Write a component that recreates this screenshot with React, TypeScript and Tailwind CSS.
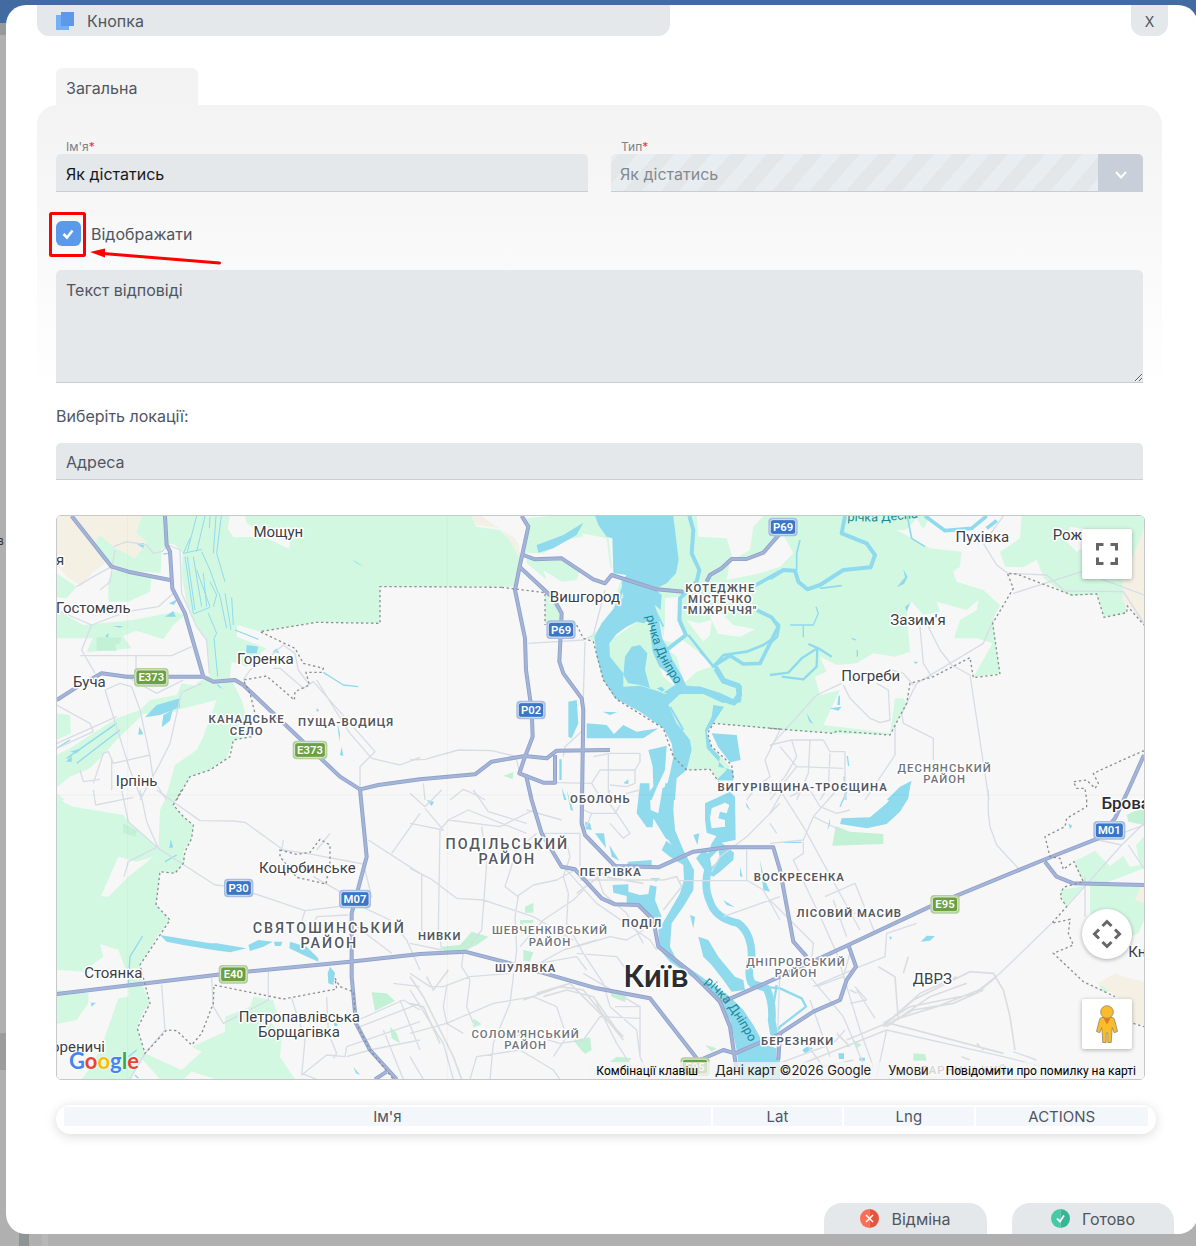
import React from "react";

type Shape = [tile: keyof typeof TILE, d: string];

/* Map tiles share one drawing space; each tile has its own origin. */
const TILE = {
  a: "translate(0 0)",
  b: "translate(1080 0)",
  c: "translate(2160 0)",
  d: "translate(0 840)",
  e: "translate(1080 840)",
  f: "translate(2160 840)",
};

const GREEN: Shape[] = [
  ["a", "M350 18V100L375 105 398 130 396 200 408 270 435 340 470 385 480 495 440 520 455 570 400 580 380 600 500 570 485 610 460 680 440 720 375 765 345 870H380L420 800 480 780 530 745 550 690 605 680 575 570 540 500 545 455 590 470 650 415 560 380 562 345 630 365 800 337 990 340 990 230H1390L1410 165 1410 130 1380 90 1350 60 1280 50 1265 18Z"],
  ["a", "M265 18H345L350 110 335 115 332 190 240 182 180 160 115 130 135 75 160 80 190 110 255 145 290 95 258 70Z"],
  ["a", "M20 40L75 70 70 100 20 75ZM20 190L80 230 50 265 20 262ZM190 180L305 200 300 245 235 275H175V210ZM20 300L100 345 250 330 375 305 405 315 370 345 340 388 260 362 200 385H20ZM130 380L210 365 245 415 110 427ZM20 610L60 615 63 670 20 690Z"],
  ["a", "M395 520L455 530 455 575 400 582 380 605 280 612 200 690 160 735 120 775 60 800 20 832V735L60 715 130 670 200 625 270 600 300 570 380 555Z"],
  ["a", "M20 850L45 870H20Z"],
  ["d", "M20 10L45 40 70 50 220 75 240 100 325 175 330 60 360 0H395L370 45 400 80 430 105 425 145 400 185 405 215 375 250 330 245 318 345 360 390 325 435 270 525 275 580 300 640 280 665 262 710 270 750 285 790 240 868H95L130 820 165 740 205 625 235 620V560L205 480 150 462 160 500 100 545 20 540Z"],
  ["d", "M20 600L115 610V640L80 690 20 702ZM525 680L600 650 610 620 670 630 685 685 650 675 695 745 690 800 735 868H500L425 845 400 868H330L270 800 285 790 395 840 455 785 425 770 525 725Z"],
  ["b", "M345 25L420 18H555L595 80 607 180 570 110 540 75 470 90 400 130 345 130ZM350 140L450 150 510 180 500 210 455 215 400 180 410 210 350 160ZM405 250L450 300 455 340 405 340ZM635 205L640 260 575 340 560 400 535 385 600 330 620 250Z"],
  ["b", "M790 18H1560L1540 60 1460 60 1560 115 1655 125 1650 170 1630 185 1640 215 1720 240 1770 285 1748 330 1770 490 1690 502 1748 400 1700 385 1632 385 1650 330 1700 300 1705 270 1670 300 1580 275 1590 305 1540 315 1505 275 1490 300 1500 425 1455 440 1390 430 1340 460 1280 465 1230 440 1250 485 1215 500 1230 555 1290 540 1240 645 1440 670 1455 565 1480 565 1490 580 1440 675 1270 670 1080 657 910 640 890 670 905 710 960 770 935 820 900 778 830 780 845 720 770 580 800 535 770 420 735 285 680 240 770 220 800 150Z"],
  ["b", "M680 335L720 340 728 420 760 500 800 535 760 560 600 530 590 400Z"],
  ["c", "M755 18L750 85 690 125 705 170 760 172 800 150 822 205 860 235 905 258 980 252 1002 322 1070 308 1058 245 1065 210 1085 150 1122 60V18Z"],
  ["f", "M945 285L910 215 975 183 1020 228 1060 198 1080 230 1110 225 1098 165 1122 140V235L1000 282ZM960 285L1122 290V390L1105 430 1080 440 960 370ZM870 300L945 287 885 350ZM988 585L1025 580 1035 600 1000 608Z"],
];

const BEIGE: Shape[] = [
  ["a", "M20 18H275L258 70 290 95 255 145 190 110 150 75 130 110 165 160 130 185 95 228 50 200 20 165Z"],
  ["b", "M185 18H240L300 60 330 100 325 140 300 90 270 55 200 45Z"],
  ["c", "M1122 60L1085 150 1058 205V275L1080 290 1122 345Z"],
  ["f", "M985 580L1035 550 1060 560 1122 575V705L1090 700 1040 620ZM1112 290H1122V340L1095 330Z"],
];

const LAND: Shape[] = [
  ["a", "M540 18L533 55 550 82 640 80 718 117 720 95 640 70 590 40 585 18Z"],
  ["b", "M215 18H335L350 50 335 120 315 85 275 60ZM515 70L590 85 600 170 575 210 555 130 530 110ZM860 18H1060L1030 50 1020 120 970 150 950 85 865 80ZM960 150L1010 150 1060 130 1120 75 1150 130 1110 170 1050 190 950 210ZM935 310L970 345 1035 358 990 380 925 372 900 320ZM765 265L808 260 805 330 825 370 785 397 760 390 765 340ZM815 388L865 425 910 468 860 485 822 520 800 440 775 420ZM830 330L865 340 905 330 900 375 880 395Z"],
  ["c", "M410 60L440 25 455 50 480 70 470 95ZM900 50L960 60 940 115 920 125 890 95Z"],
  ["d", "M205 200L260 215 310 200 235 260 175 320 153 318Z"],
];

const PARK: Shape[] = [
  ["a", "M140 382L215 383 210 400 195 405 200 422H140Z"],
  ["b", "M280 797L310 787 308 808Z"],
  ["d", "M220 100L262 122 255 140 218 128ZM965 607L1010 610 1035 633 975 663ZM1020 710L1040 730 1050 760 1025 745Z"],
  ["e", "M95 470L150 465 185 425 235 440 200 465 160 483H100ZM345 350L370 338V368H345ZM330 390H370V400H340L335 440ZM340 480L370 487 360 515 340 512ZM600 605L650 610 645 636 605 620ZM190 685L215 703 190 712ZM490 750L540 742 545 780 525 792 505 770ZM620 800L665 805 645 825 600 815ZM885 765L920 775 905 785Z"],
  ["f", "M197 108L240 125 340 132V162L187 167ZM430 790L465 793 470 812 430 812ZM250 750L275 765 260 775ZM1070 75L1100 60H1122V105L1075 95Z"],
];

const WATER: Shape[] = [
  ["b", "M555 18H790L806 150 798 190 770 220 735 238 755 255 752 300 735 285 727 330 700 340 680 335 650 350 620 372 598 400 600 440 640 490V530L690 527 740 542 765 552 795 540 805 525 870 530 960 570 940 580 880 552 810 552 775 585 800 640 840 690 845 720 830 780 800 805 795 870H760L780 790 790 740 785 700 760 655 690 605 615 565 580 510 560 440 553 380 575 340 640 260 635 215 650 195 610 190 607 85 590 80 565 45Z"],
  ["b", "M700 325L735 285 748 335 757 385 772 412 788 450 816 498 832 535 800 552 760 548 795 525 772 490 748 470 728 425 722 380 722 345Z"],
  ["b", "M640 495L645 440 665 410 690 405 712 430 705 480 720 535 690 525 655 520ZM380 105L460 75 520 38 500 75 430 115 385 128ZM475 575L500 570 505 640 485 685 475 680ZM530 640L590 645 612 672 640 645 680 665 745 655 700 685H530ZM578 605L622 607 600 615ZM715 720L770 707 765 780 740 833 725 870H695L730 830 728 770ZM905 670L980 675 992 750 960 757 925 712ZM910 585L942 590 910 640 890 665 905 715 930 740 925 770 970 780 970 812 920 810 950 780 890 715 885 660 905 620ZM640 820L655 808V822ZM448 748H455V810H448ZM455 832L470 870H462ZM740 535L755 530 765 540 755 545Z"],
  ["a", "M320 585L390 565V592L330 615 285 622ZM340 615L368 600 360 632 335 652ZM590 405L625 410 620 430 588 430ZM268 650L280 672 265 675ZM345 320L370 303 378 320ZM357 280L382 268 372 285ZM255 98L283 100 280 115ZM165 380L175 368 175 382ZM905 147L945 172 920 160ZM187 348H220L210 353ZM862 640L870 670 868 695ZM870 735L875 710 880 738ZM800 593L808 602 800 605ZM48 755L65 738 65 755ZM60 725L95 715 80 730ZM668 425L680 415 688 430ZM500 520L520 538 505 530Z"],
  ["c", "M400 178L413 200 402 222 380 232 405 202ZM405 290L420 280 410 305ZM430 455L446 455 437 462ZM110 610L130 643 118 635ZM178 595L215 590 205 602ZM205 560L210 555V585H202ZM425 812L418 840 400 870H350L390 830Z"],
  ["d", "M330 435L480 460 500 460 590 475 540 487 490 480 400 465 350 455ZM595 465L625 450 668 455 640 470 600 483ZM672 455H697L693 468H675ZM720 455L770 470 805 505V515L760 495 718 475ZM840 530L855 548 850 585 835 580 833 550ZM910 830L930 855 918 850ZM122 638H138L125 650ZM358 175L362 148 370 172ZM852 697H862V708H852Z"],
  ["e", "M690 -20H718L722 60 745 70 760 -20H795L790 60 795 120 820 180 852 240 850 300 820 350 785 400 780 470 800 510 860 550 910 585 960 620 1000 660 1030 705 1060 760 1110 780V870H990L980 780 960 690 925 640 880 582 845 560 780 515 750 480 745 420 765 388 810 310 822 270 820 225 780 200 755 180 770 150 730 85 728 112 710 112 680 70Z"],
  ["e", "M608 285L655 283V305L690 315 715 312 720 285 740 290 735 330 755 380 735 392 680 345 650 340V318L610 308ZM525 95L540 100 545 120 528 118ZM555 130H582L588 175ZM598 165L628 212 605 200ZM655 215L725 210V230L650 225ZM720 265H750L738 275ZM840 375L855 380 850 415ZM940 330L975 352 950 345ZM990 230L998 262 990 258ZM1050 210L1062 265 1080 305 1060 300ZM1007 35L1022 62 1010 50ZM50 30L72 35 65 48ZM470 0L490 62 482 60Z"],
  ["e", "M850 135L868 130 862 165ZM858 205L880 180 895 190 905 160 925 130 975 150 935 158 972 188 970 210 930 245 910 260 890 250ZM885 40L960 5 975 20 977 150 960 148 925 140 890 128 885 90ZM865 440L895 450 925 500 975 560 1000 570 1005 600 965 605 940 570 905 525 880 500Z"],
  ["f", "M420 -10L415 25 390 65 350 102 290 115 210 102 215 85 300 82 350 40 372 10 350 28 400 -10ZM180 85L172 120 180 105ZM452 455L470 437 495 438 480 452ZM357 440H366L362 450ZM97 780L110 770 130 775 105 790ZM205 790H222V807H207ZM268 803H285V812H268ZM895 100L907 107 900 118Z"],
];

/* Small islands that sit on top of the water */
const ISLANDS: Shape[] = [
  ["e", "M905 55L945 38 958 45 950 70 930 65 925 85 945 90 945 110 905 115 900 85ZM740 130L785 165 775 150ZM900 205L925 180 930 205 905 232Z"],
  ["b", "M748 832L768 790 765 830 752 838Z"],
];

/* Narrow channels, drawn as strokes: [tile, path, width] */
const CHANNELS: [keyof typeof TILE, string, number][] = [
  ["b", "M838 18L850 60 845 130 868 180 860 215 810 265 808 330 828 375 770 420", 12],
  ["b", "M662 140L655 190 600 340 575 360", 8],
  ["b", "M835 375L910 470 940 435 1010 425 1060 405 1090 385", 8],
  ["b", "M1110 185L1020 235M1040 300L1085 322 1105 350 1080 400 1050 460 1000 462 960 437 915 465 940 515 990 530 988 572 960 578 880 545 805 545", 11],
  ["b", "M805 545L870 538 930 558 972 578 988 555 985 528 940 512 918 475", 17],
  ["b", "M780 590L820 660M735 300L760 350M870 425L900 455", 6],
  ["c", "M225 18L215 70 290 100 315 135 302 172 220 180 150 225 112 238 85 215 75 182 40 180 0 205", 12],
  ["c", "M90 90L80 130 80 180M150 235L215 227M412 18L425 85 465 110", 5],
  ["c", "M465 18L525 62 605 55 650 18M650 55L680 32", 11],
  ["c", "M0 318L28 345 22 380 0 400M0 495L55 488 95 445 142 415 140 470 100 508 35 500M115 402L145 415 185 440", 7],
  ["c", "M138 290L145 310 130 345 60 345M100 345V382M245 385L258 390M262 420V440M232 738L236 768M222 800L228 870", 4],
  ["e", "M895 235Q880 290 900 335 915 385 985 400 1025 430 1025 500 1010 550 1025 580L1070 595Q1090 640 1085 690L1095 750", 23],
  ["f", "M0 592L30 595 95 625 108 650 30 710 0 760M20 585L5 680", 7],
  ["f", "M230 5L210 50M40 157H95", 4],
  ["a", "M440 18L412 125M465 18L440 125M480 18L478 55M498 18L490 130M514 18L500 130M400 130L455 118M420 85L400 130M455 125L480 180 505 250M500 130L525 215M430 140L455 290M412 140L435 300M440 180L480 290M460 190L470 290M480 215L500 255 490 290M508 250L530 355M525 250L543 360M545 262L550 345M430 312L480 292M475 310L500 370 492 385 503 500M405 140L430 310", 3],
  ["a", "M555 360L625 388M820 487L880 525 925 530M50 745L200 640M80 760L210 660M20 715L60 690M340 132L355 130", 4],
  ["d", "M278 438L240 500 235 580M345 215L380 195M235 800L260 780M255 855L265 865", 4],
];

const MINOR: Shape[] = [
  ["a", "M80 230L130 200 185 170M190 110L230 95 290 105 310 130 335 125 355 105 390 120 395 250 440 350 470 390 478 490M20 300L125 345 230 305 325 290 370 250M125 345L95 420 135 490M90 437H365L425 410M258 437V500M150 240L180 215 195 120M230 500L320 550 400 510M395 545L360 700 330 760 270 870M165 540L215 700 240 780 275 870M165 540L210 520 245 530 270 600 300 740 310 810 350 870M20 585L120 640 130 665 20 715M20 700L200 620M130 820L160 730 175 725 190 760 300 735M185 745V840M90 780L100 815 150 808M580 510L600 480 640 455 700 405 735 430 745 480 775 520M670 475L690 475 760 535 790 515 975 725 930 770V838M800 510L890 655 900 670 965 745 1050 765 1110 742M400 545L455 520"],
  ["b", "M0 750L45 748 145 720 245 722 330 742M355 400L520 390 550 375 585 240M525 395L520 560 520 660 465 710 460 740M595 730V870M550 740L600 730H690V755L675 780H570L545 820 575 870M440 818L545 820M675 780V820L650 830 600 825M320 750L330 790M40 820L45 870M120 870L160 838 200 855 225 870M1110 660L1065 750 1080 800 1040 830 1010 870"],
  ["c", "M700 18L640 100 680 165 720 195M712 190L830 195 885 243 1060 245 1122 340M730 250L935 185 1122 255M670 330L640 400 440 520 395 610 400 640 490 685V750M450 350L460 460 485 500M475 350L510 420 545 465 600 495 657 870M220 525L240 565 300 625 330 638 360 630 355 540 320 520M215 520L140 555 0 710M375 645V735L285 870M0 705L65 690H160L180 725H225V870M30 710L80 770 220 775M65 690L80 740 45 800 0 850M120 690L115 790 80 870M180 730L175 830 150 870M80 770L0 870M365 480L400 490 430 525"],
  ["d", "M130 0L137 45 250 22M215 0L235 95 320 170M270 0L290 95 325 175M320 0L450 92 550 93 585 97 700 180 770 190 940 222M320 172L235 215 222 260M325 175L495 285 550 290 700 340 765 362 905 345M765 362L755 395M800 180L840 130M700 150L695 180M790 260L870 305M945 240L965 320 935 350 1020 390 1070 450 1110 540M955 150L1110 250M1025 190L1110 70M790 410L800 380 895 375M920 410L1025 490M655 545V630L520 700 490 650 485 565M335 585L345 720 285 790M725 625L765 750 755 855 830 795 885 800 890 770 1110 695M830 620L835 730 860 790 850 805M925 690L1060 630 1110 660M890 800L960 780 1110 750M930 710L1110 640M1050 630L1110 780M1000 720L1060 868M755 850L800 868M1030 580L1110 590M240 868L285 790"],
  ["e", "M90 120L85 420 95 480M0 100L100 120 45 55M0 10L45 50 95 0M90 120L115 90 270 110 370 60M115 90L175 60 350 130M190 0L235 65 350 100M35 250V450M0 235L60 265 140 325 220 330 370 380 490 450M215 110L230 220 215 420 170 480M285 290L320 180 380 130M285 290L325 320 315 380 320 480 300 640 250 760 240 868M320 320L370 285 440 270 495 240M470 160L480 200 460 260 475 310 470 400 520 490 580 580 600 650M160 485L155 530 180 570 170 650 190 700M0 460L95 480M0 550L60 590 100 590 180 560 300 550M110 590L100 650 110 700 160 730M0 730L110 700 250 640 370 620M0 600L100 760 130 868M0 800L40 868M250 730L380 740 450 760 520 750 570 680 690 685M180 868L200 800 330 780 430 840 450 868M430 800L470 740 440 650 370 620M455 90L350 60M520 60L545 70 530 110M545 70H620L590 30 600 0M620 70L660 130 640 145 600 100M615 70L650 10 690 0M460 230L560 340 720 450 740 480M560 250L580 310 650 370 700 460M500 470L600 440 650 450 700 420M500 490L620 500 680 580M520 550L690 650V800L720 868M600 650L680 720 690 800M560 640L620 760 690 868M615 650H690M940 380L1110 320M810 272H1010V180M905 245L930 200 1010 140 1110 40M1010 270L1060 300 1110 390M400 130H510V230M330 470L400 390 490 330 520 300M330 530L500 500 530 540M370 530L460 480 560 450"],
  ["f", "M0 160L100 150 130 80 200 0M100 155V190L70 210 160 400 200 490 270 720 310 830M20 130L0 100M30 0L100 110 270 420M40 0L0 70M60 20L120 -10M120 0L150 50 200 70 240 60M130 80L210 120M165 320L255 280 315 430 235 465M200 390L280 360M190 330L230 440M0 330L130 460 120 560 220 680 300 868M130 590L270 530 345 500 350 430 440 400M240 490L220 560 140 590M255 590L290 630 240 640M655 0V70L660 110 680 165 745 235M985 150L1055 165 1122 100M1075 165L1122 235M945 260V380M1055 130L1122 105M890 350L1055 165M845 400L690 550 620 605M730 785L800 810M320 860L350 720 700 800 860 840M225 720L190 760 0 830M100 750L160 830 250 810M120 630L180 800M30 540L20 800M260 600L315 685"],
];

const RAIL: Shape[] = [
  ["e", "M0 560L40 620 130 800 155 868M50 560L70 600 115 540M340 630L450 590 520 600 640 750M380 610L480 580 540 640 640 740M400 620L470 600 550 620 620 720M510 270H760L800 260 815 290 760 360M580 260L700 280M0 640L40 650 90 760M500 310L580 250"],
  ["f", "M230 750L350 700 430 630 600 545 670 550 700 600 720 680 735 780M340 700L420 650 620 610 680 560M350 710L480 620 590 580M360 690L450 610 560 560M370 690L500 650 640 595M340 710L430 660 550 640 640 600M385 690L375 560 325 530M400 550L415 500M350 720L100 820M360 700L700 790M200 730L240 770M620 760L640 780M240 600L260 610M575 800L600 810"],
];

const MAJOR: Shape[] = [
  ["a", "M65 18L185 170 235 185 360 210"],
  ["a", "M345 18L350 105 360 125 367 235 405 310 460 500"],
  ["a", "M20 570L75 535 155 490 230 500 460 500 490 515 555 510 580 525 870 800 930 838 985 825 1110 808 1275 793 1325 755 1425 738 1490 745 1520 722 1680 720"],
  ["d", "M930 -2L950 200 905 370 905 560 918 700 960 780 1040 868M975 868L1010 845"],
  ["d", "M20 612L270 582 540 550 900 515 1110 492 1245 485 1380 520 1640 595 1800 625 1940 805"],
  ["b", "M335 18L355 50 330 165 315 240 345 385 348 480 365 600 368 680 345 740 328 790 400 818H435V735"],
  ["b", "M348 795L365 870 395 970 455 1070 495 1078 575 1165 615 1183 685 1185 730 1230 745 1310 840 1385 930 1475 960 1550 980 1680"],
  ["b", "M340 135L375 148 455 145 550 208 585 220 605 195 740 238 820 245M890 215L900 195 935 175 965 147H1010L1060 128 1110 70"],
  ["b", "M330 172L430 265 455 310 448 455 460 490 515 565 520 600 515 940 525 975 615 1068 745 1072 850 1025 950 1012H1090L1110 1080 1150 1295 1190 1340"],
  ["f", "M160 500L235 465 480 350 820 210 985 145 1035 85 1075 0 1122 -105M825 215L860 260 910 280 1122 285"],
  ["f", "M235 465L258 530 230 570 210 630 130 665 30 730 25 810M-140 635L30 560 160 500M-210 810L-140 780 -105 790 30 732"],
];

const BORDERS: Shape[] = [
  ["a", "M1355 232L1110 230H990V340L800 337 630 365 735 415 760 460 820 475 815 487H768L778 525 735 545 733 570 650 498 580 510 600 550 615 610M605 680L550 690 540 740 480 780 420 800 380 870"],
  ["d", "M395 0L370 45 400 80 430 105 425 145 405 185 400 220 375 250 330 245 318 345 360 390 270 525 300 640 262 715 285 790 350 720 380 722 425 765 455 730 490 640 492 585 700 627 860 597 855 565 870 590 910 605 918 700 960 780 1030 868"],
  ["d", "M690 180L740 193 780 187 810 148 840 165V215L828 282 740 262 690 200Z"],
  ["b", "M275 232L405 248V345M500 345L520 385 550 395 580 510 620 568 760 655 790 740 830 780 900 778 930 820M1110 657L910 640 893 670 905 710 965 765 970 805"],
  ["c", "M0 655L190 670 200 663 360 675 410 580 420 520 490 500 600 443 610 503 690 493 668 340 730 235 712 190 740 192 905 255 980 252 1002 322 1070 308 1072 288 1122 345M1122 722L1080 740 970 790 985 820 975 835 950 810 910 815 920 835H945L950 870"],
  ["f", "M950 30V50L890 85 885 110 825 140 840 200 870 205 880 238 912 215 940 275 880 292 870 320 890 350 845 400 900 388 895 430 910 465 850 490 940 575 1035 620M1090 700L1122 710"],
];

const Layer = ({ shapes, ...rest }: { shapes: Shape[] } & React.SVGProps<SVGGElement>) => (
  <g {...rest}>
    {shapes.map(([t, d], i) => (
      <path key={i} d={d} transform={TILE[t]} />
    ))}
  </g>
);

/* Label styles, in drawing units (three per screen pixel) */
const LABEL = {
  town: "text-[45px] font-normal fill-[#3c4046]",
  area: "text-[34px] font-semibold tracking-[3px] fill-[#54585f]",
  small: "text-[34px] font-medium tracking-[3px] fill-[#6f747b]",
  big: "text-[43px] font-medium tracking-[6px] fill-[#54585f]",
  city: "text-[51px] font-medium fill-[#2b2d31]",
  capital: "text-[96px] font-medium fill-[#2b2d31]",
};

const LABELS: [string, number, number, keyof typeof LABEL][] = [
  ["Мощун", 685, 81, "town"],
  ["я", 30, 164, "town"],
  ["Гостомель", 130, 308, "town"],
  ["Горенка", 646, 463, "town"],
  ["Буча", 118, 530, "town"],
  ["Ірпінь", 260, 828, "town"],
  ["КАНАДСЬКЕ", 590, 640, "area"],
  ["СЕЛО", 590, 674, "area"],
  ["ПУЩА-ВОДИЦЯ", 888, 648, "area"],
  ["Вишгород", 1605, 276, "town"],
  ["КОТЕДЖНЕ", 2011, 246, "area"],
  ["МІСТЕЧКО", 2011, 280, "area"],
  ["\"МІЖРІЧЧЯ\"", 2011, 313, "area"],
  ["Пухівка", 2797, 97, "town"],
  ["Рожни", 3078, 89, "town"],
  ["Зазим'я", 2604, 344, "town"],
  ["Погреби", 2462, 514, "town"],
  ["ДЕСНЯНСЬКИЙ", 2684, 786, "small"],
  ["РАЙОН", 2684, 820, "small"],
  ["ВИГУРІВЩИНА-ТРОЄЩИНА", 2258, 844, "area"],
  ["ОБОЛОНЬ", 1651, 878, "area"],
  ["ПОДІЛЬСЬКИЙ", 1372, 1017, "big"],
  ["РАЙОН", 1372, 1062, "big"],
  ["ПЕТРІВКА", 1682, 1097, "area"],
  ["ВОСКРЕСЕНКА", 2248, 1112, "area"],
  ["Коцюбинське", 772, 1089, "town"],
  ["СВЯТОШИНСЬКИЙ", 838, 1270, "big"],
  ["РАЙОН", 838, 1315, "big"],
  ["НИВКИ", 1169, 1290, "area"],
  ["ШЕВЧЕНКІВСЬКИЙ", 1500, 1273, "small"],
  ["РАЙОН", 1500, 1307, "small"],
  ["ШУЛЯВКА", 1427, 1385, "area"],
  ["ПОДІЛ", 1776, 1251, "area"],
  ["ЛІСОВИЙ МАСИВ", 2398, 1222, "area"],
  ["ДНІПРОВСЬКИЙ", 2238, 1367, "small"],
  ["РАЙОН", 2238, 1401, "small"],
  ["ДВРЗ", 2647, 1423, "town"],
  ["БЕРЕЗНЯКИ", 2243, 1605, "area"],
  ["СОЛОМ'ЯНСЬКИЙ", 1427, 1583, "small"],
  ["РАЙОН", 1427, 1617, "small"],
  ["Стоянка", 190, 1405, "town"],
  ["Петропавлівська", 748, 1535, "town"],
  ["Борщагівка", 747, 1580, "town"],
  ["ореничі", 84, 1627, "town"],
  ["ДАРНИЦЬКИЙ", 2740, 1692, "small"],
  ["Київ", 1818, 1430, "capital"],
  ["Бровари", 3256, 898, "city"],
  ["Княжичі", 3322, 1341, "town"],
];

const SHIELDS: [string, number, number, "blue" | "green"][] = [
  ["E373", 304, 502, "green"],
  ["E373", 780, 720, "green"],
  ["P69", 1533, 359, "blue"],
  ["P02", 1443, 600, "blue"],
  ["P69", 2199, 51, "blue"],
  ["P30", 566, 1134, "blue"],
  ["M07", 915, 1167, "blue"],
  ["M01", 3178, 961, "blue"],
  ["E95", 2685, 1183, "green"],
  ["E40", 550, 1393, "green"],
  ["E95", 1935, 1670, "green"],
];

function CityMap() {
  return (
    <svg
      viewBox="21 18 3261 1689"
      preserveAspectRatio="xMidYMid slice"
      className="block h-[563px] w-full bg-[#f7f7f7] font-['Roboto',sans-serif]"
      role="img"
      aria-label="Карта Києва"
    >
      <Layer shapes={GREEN} fill="#d3f8e2" />
      <Layer shapes={BEIGE} fill="#f5f0e4" />
      <Layer shapes={LAND} fill="#f7f7f7" />
      <Layer shapes={PARK} fill="#c3f1d5" />
      <Layer shapes={WATER} fill="#90daee" />
      <g fill="none" stroke="#90daee" strokeLinejoin="round">
        {CHANNELS.map(([t, d, w], i) => (
          <path key={i} d={d} strokeWidth={w} transform={TILE[t]} />
        ))}
      </g>
      <Layer shapes={ISLANDS} fill="#f7f7f7" />
      <Layer shapes={RAIL} fill="none" stroke="#dcdde0" strokeWidth="5" />
      <Layer shapes={MINOR} fill="none" stroke="#d7dde6" strokeWidth="4" strokeLinejoin="round" />
      <Layer shapes={MAJOR} fill="none" stroke="#8fa0cb" strokeWidth="12" strokeLinejoin="round" />
      <Layer shapes={MAJOR} fill="none" stroke="#a5b5d8" strokeWidth="7" strokeLinejoin="round" />
      <Layer shapes={BORDERS} fill="none" stroke="#8c8f92" strokeWidth="4" strokeDasharray="7 8" />
      <path d="M233 18V1707M1192 18V1707M21 855H3282" fill="none" stroke="#000" strokeOpacity=".03" strokeWidth="3" />
      {SHIELDS.map(([text, x, y, kind], i) => {
        const w = text.length > 3 ? 92 : text[0] === "M" ? 84 : 76;
        const fill = kind === "blue" ? "#3a76c8" : "#6ba043";
        const rim = kind === "blue" ? "#a9bde0" : "#b3cf9f";
        return (
          <g key={i}>
            <rect x={x - w / 2 - 6} y={y - 28} width={w + 12} height="56" rx="12" fill={rim} />
            <rect x={x - w / 2} y={y - 22} width={w} height="44" rx="8" fill={fill} stroke="#fff" strokeOpacity=".7" strokeWidth="3" />
            <text x={x} y={y + 12} textAnchor="middle" className="fill-white text-[34px] font-semibold">
              {text}
            </text>
          </g>
        );
      })}
      <g stroke="#fff" strokeWidth="9" strokeLinejoin="round" style={{ paintOrder: "stroke" }} textAnchor="middle">
        {LABELS.map(([text, x, y, kind], i) => (
          <text key={i} x={x} y={y} className={LABEL[kind]}>
            {text}
          </text>
        ))}
      </g>
      <g className="fill-[#168a9b] text-[38px]">
        <path id="dnipro-north" d="M1788 318Q1810 430 1875 520" fill="none" />
        <path id="dnipro-south" d="M1963 1418Q2040 1480 2100 1600" fill="none" />
        <path id="desna" d="M2392 32Q2480 40 2610 22" fill="none" />
        <text><textPath href="#dnipro-north">річка Дніпро</textPath></text>
        <text><textPath href="#dnipro-south">річка Дніпро</textPath></text>
        <text><textPath href="#desna">річка Десна</textPath></text>
      </g>
    </svg>
  );
}

function Pegman() {
  return (
    <svg viewBox="0 0 24 38" className="h-[38px] w-6" aria-hidden="true">
      <g fill="#fbbc2b" stroke="#8f8461" strokeWidth=".8">
        <path d="M7 12.500h10q2 0 2.600 2.500l2.900 11.500-3.300 1.200-1.900-5.200-.5 5-.6 10h-3.400V28h-1.600v9.500H7.800l-.6-10-.5-5-1.900 5.200-3.300-1.200L4.400 15Q5 12.500 7 12.500Z" />
        <circle cx="12" cy="7" r="6.300" />
      </g>
      <path d="M8.500 13.200h7L12 19.500Z" fill="#e2762e" />
    </svg>
  );
}

const field =
  "w-full rounded-t-[5px] border-b border-[#c9ced6] bg-[#e4e8eb] px-[10px] text-[16px] placeholder:text-[#50565f] placeholder:opacity-100 outline-none";

function MapPanel() {
  return (
    <section className="relative -mr-[2px] mt-[35px] overflow-hidden rounded-[5px] border border-[#c6c8ca]">
      <CityMap />
      <button
        type="button"
        aria-label="На весь екран"
        className="absolute right-3 top-[13px] grid size-[50px] place-items-center rounded-[2px] bg-white shadow-[0_1px_4px_rgba(0,0,0,0.3)]"
      >
        <svg viewBox="0 0 22 22" className="size-[22px]" fill="none" stroke="#666" strokeWidth="3">
          <path d="M1.500 7.500v-6h6M14.500 1.500h6v6M20.500 14.500v6h-6M7.500 20.500h-6v-6" />
        </svg>
      </button>
      <button
        type="button"
        aria-label="Керування камерою"
        className="absolute bottom-[120px] right-3 grid size-[50px] place-items-center rounded-full bg-white shadow-[0_1px_4px_rgba(0,0,0,0.3)]"
      >
        <svg viewBox="0 0 30 30" className="size-[30px]" fill="none" stroke="#666" strokeWidth="3">
          <path d="M10.500 7l4.500-4.500L19.500 7M10.500 23l4.500 4.500 4.500-4.500M7 10.500L2.500 15 7 19.500M23 10.500l4.500 4.500-4.500 4.500" />
        </svg>
      </button>
      <button
        type="button"
        aria-label="Перегляд вулиць"
        className="absolute bottom-[30px] right-3 grid size-[50px] place-items-center rounded-[2px] bg-white shadow-[0_1px_4px_rgba(0,0,0,0.3)]"
      >
        <Pegman />
      </button>
      <a
        href="#google"
        aria-label="Google"
        className="absolute bottom-[3px] left-3 font-['Lato',sans-serif] text-[22px] font-bold leading-[30px] [text-shadow:0_0_2px_#fff,0_0_2px_#fff]"
      >
        <span className="text-[#4285f4]">G</span>
        <span className="text-[#ea4335]">o</span>
        <span className="text-[#fbbc05]">o</span>
        <span className="text-[#4285f4]">g</span>
        <span className="text-[#34a853]">l</span>
        <span className="text-[#ea4335]">e</span>
      </a>
      <div className="absolute bottom-0 right-0 flex h-[17px] items-center gap-[17px] whitespace-nowrap bg-[#f5f5f5]/75 pl-[6px] pr-2 text-[12px] text-black">
        <button type="button" className="font-['Roboto',sans-serif]">Комбінації клавіш</button>
        <span className="text-[13px] text-[#222]">Дані карт ©2026 Google</span>
        <a href="#terms" className="text-[13px] text-[#222]">Умови</a>
        <a href="#report" className="font-['Roboto',sans-serif]">Повідомити про помилку на карті</a>
      </div>
    </section>
  );
}

export default function App() {
  return (
    <div className="relative min-h-[1246px] overflow-hidden bg-[#b0b0b0] font-['Inter',sans-serif] text-[16px] text-[#50565f]">
      <div className="absolute inset-x-0 top-0 h-[23px] bg-[#426ca1]" />
      <div className="absolute left-0 top-[23px] h-3 w-full bg-[#98999a]" />
      <div className="absolute left-0 top-[1033px] h-[37px] w-[6px] bg-[#9c9c9c]" />
      <div className="absolute bottom-0 left-[19px] h-5 w-[10px] bg-[#8f9596]" />
      <div className="absolute bottom-0 left-[42px] h-5 w-[6px] bg-[#b7b7b7]" />
      <span className="absolute -left-[3px] top-[533px] text-[12px] leading-4 text-[#333]">в</span>

      <main className="relative -mr-[2px] ml-[6px] mt-[5px] overflow-hidden rounded-[20px] bg-white">
        <header className="flex justify-between pl-[31px] pr-[30px]">
          <div className="flex h-[31px] w-[56%] items-center gap-[13px] rounded-b-[12px] bg-[#e4e8eb] pl-[19px]">
            <svg viewBox="0 0 18 18" className="size-[18px]" aria-hidden="true">
              <path d="M0 3h13v15H0z" fill="#74b0f6" />
              <path d="M5 0h13v14H5z" fill="#5c99e8" />
            </svg>
            <h1>Кнопка</h1>
          </div>
          <button type="button" aria-label="Закрити" className="h-[31px] w-[37px] rounded-b-[12px] bg-[#e4e8eb] pt-[2px] text-[14px]">
            X
          </button>
        </header>

        <form className="pl-[31px] pr-9" onSubmit={(e) => e.preventDefault()}>
          <button
            type="button"
            className="ml-[19px] mt-8 block h-[37px] w-[142px] rounded-t-[6px] bg-[#f3f3f3] px-[10px] pt-[3px] text-left"
          >
            Загальна
          </button>

          <div className="rounded-t-[20px] bg-[linear-gradient(to_bottom,#f3f3f3_0,#ffffff_290px)] px-[19px] pt-[34px]">
            <div className="grid grid-cols-2 gap-[23px]">
              <div>
                <label htmlFor="name" className="ml-[10px] block h-[15px] text-[12px] leading-[15px] text-[#7b818b]">
                  Ім'я<span className="text-[#e0384b]">*</span>
                </label>
                <input id="name" defaultValue="Як дістатись" className={`${field} h-[38px] pt-[2px] text-[#15181c]`} />
              </div>
              <div>
                <label htmlFor="type" className="ml-[10px] block h-[15px] text-[12px] leading-[15px] text-[#7b818b]">
                  Тип<span className="text-[#e0384b]">*</span>
                </label>
                <div className="relative">
                  <select
                    id="type"
                    disabled
                    className="block h-[38px] w-full appearance-none rounded-t-[5px] border-b border-[#c9ced6] bg-[repeating-linear-gradient(-49deg,#e8edf1_0,#e8edf1_14px,#e3e7ea_14px,#e3e7ea_28px)] px-[9px] pt-[2px] text-[16px] text-[#85898e] opacity-100"
                  >
                    <option>Як дістатись</option>
                  </select>
                  <span className="pointer-events-none absolute inset-y-0 right-0 grid w-[45px] place-items-center rounded-tr-[5px] bg-[#c9cfd8]">
                    <svg viewBox="0 0 12 8" className="mt-1 h-2 w-3" fill="none" stroke="#fff" strokeWidth="2">
                      <path d="M1 1l5 5.500L11 1" />
                    </svg>
                  </span>
                </div>
              </div>
            </div>

            <div className="relative mt-[29px] h-[25px]">
              <label className="flex items-center gap-[10px]">
                <span className="relative block size-[25px]">
                  <input type="checkbox" defaultChecked className="block size-[25px] appearance-none rounded-[6px] bg-[#5c99e8]" />
                  <svg viewBox="0 0 25 25" className="pointer-events-none absolute inset-0" fill="none" stroke="#fff" strokeWidth="2.500">
                    <path d="M7.500 13l3.500 3.500 5.500-7" />
                  </svg>
                </span>
                Відображати
              </label>
              <svg
                viewBox="0 0 174 54"
                className="pointer-events-none absolute -left-[7px] -top-[9px] h-[54px] w-[174px]"
                aria-hidden="true"
              >
                <rect x="1.500" y="1.500" width="34" height="42" rx="1" fill="none" stroke="#f00" strokeWidth="3" />
                <path d="M54 41.500L170.500 51" stroke="#f00" strokeWidth="3" strokeLinecap="round" />
                <path d="M41 40L56 36.500V45.500Z" fill="#f00" />
              </svg>
            </div>

            <textarea
              aria-label="Текст відповіді"
              placeholder="Текст відповіді"
              className={`${field} mt-6 block h-[113px] resize py-2 leading-6`}
            />

            <label htmlFor="address" className="mt-[21px] block leading-6">
              Виберіть локації:
            </label>
            <input id="address" placeholder="Адреса" className={`${field} mt-[15px] block h-[37px] pt-[2px]`} />

            <MapPanel />

            <div className="-mr-[13px] mt-[25px] rounded-[15px] bg-white px-[6px] pb-[6px] shadow-[0_2px_12px_rgba(0,0,0,0.15)]">
              <table className="w-full table-fixed border-separate border-spacing-[2px] text-[15px]">
                <thead>
                  <tr className="text-center leading-[19px]">
                    <th className="bg-[#f3f6fa] p-0 font-normal">Ім'я</th>
                    <th className="w-[12%] bg-[#f3f6fa] p-0 font-normal">Lat</th>
                    <th className="w-[12%] bg-[#f3f6fa] p-0 font-normal">Lng</th>
                    <th className="w-[16%] bg-[#f3f6fa] p-0 font-normal">ACTIONS</th>
                  </tr>
                </thead>
              </table>
            </div>
          </div>

          <footer className="-mr-3 mt-[69px] flex justify-end gap-[25px]">
            <button type="button" className="flex h-[31px] w-[163px] items-center justify-center gap-3 rounded-t-[18px] bg-[#e4e8eb]">
              <svg viewBox="0 0 19 19" className="size-[19px]" aria-hidden="true">
                <path d="M9.500 0a9.500 9.500 0 0 0 0 19z" fill="#fb6d55" />
                <path d="M9.500 0a9.500 9.500 0 0 1 0 19z" fill="#e5543d" />
                <path d="M6 6l7 7M13 6l-7 7" stroke="#fff" strokeWidth="1.500" />
              </svg>
              Відміна
            </button>
            <button type="submit" className="flex h-[31px] w-[162px] items-center justify-center gap-3 rounded-t-[18px] bg-[#e4e8eb]">
              <svg viewBox="0 0 19 19" className="size-[19px]" aria-hidden="true">
                <path d="M9.500 0a9.500 9.500 0 0 0 0 19z" fill="#44cba6" />
                <path d="M9.500 0a9.500 9.500 0 0 1 0 19z" fill="#35b795" />
                <path d="M6 9.500l3 3 4-6" stroke="#fff" strokeWidth="1.800" fill="none" />
              </svg>
              Готово
            </button>
          </footer>
        </form>
      </main>
    </div>
  );
}
